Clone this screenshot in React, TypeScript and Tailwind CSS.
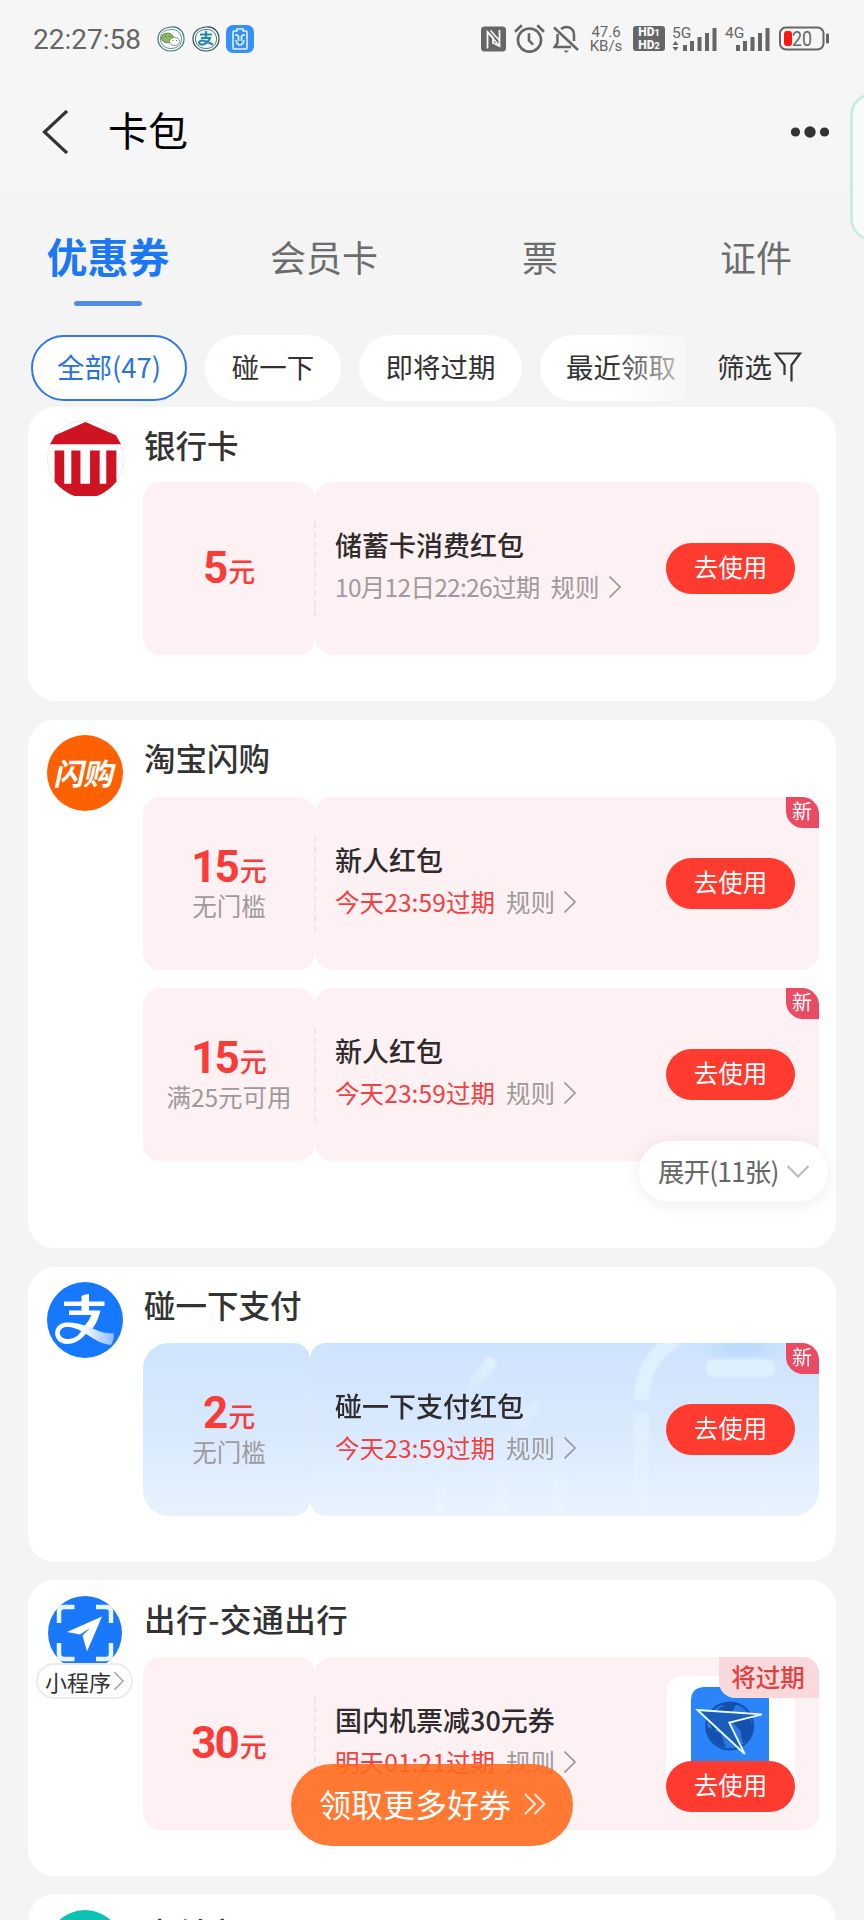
import type { ReactNode } from 'react'

type Coupon = {
  amount: string
  condition?: string
  title: string
  expire: string
  urgent?: boolean
  badge?: string
  thumb?: boolean
  blue?: boolean
}

type Shop = {
  name: string
  icon: ReactNode
  cardClass: string
  nameClass?: string
  listClass?: string
  coupons: Coupon[]
  miniApp?: boolean
  more?: string
}

const tabs = ['优惠券', '会员卡', '票', '证件']

function BankIcon() {
  return (
    <svg viewBox="0 0 76 76" className="size-[77px] -mt-[1px]">
      <circle cx="38" cy="38" r="37.5" fill="#fff" stroke="#ececec" strokeWidth="1" />
      <path d="M38 2 68 15 73 24H3L8 15Z" fill="#cf1322" />
      <path d="M7.500 30H17V63H24V30H33V63H42.500V30H52V63H58.500V30H68.500V61Q60 71 49.500 75H27Q16 71 7.500 61Z" fill="#cf1322" />
    </svg>
  )
}

function FlashIcon() {
  return (
    <div className="size-[76px] mt-[1px] rounded-full bg-[#ff6000] flex items-center justify-center">
      <span className="text-[30px] leading-none font-bold text-white -skew-x-12 tracking-[-0.5px] pb-[2px] whitespace-nowrap">闪购</span>
    </div>
  )
}

function AlipayIcon() {
  return (
    <svg viewBox="0 0 76 76" className="size-[76px] mt-[1px]">
      <defs>
        <linearGradient id="tail" x1="0" x2="1">
          <stop offset="0.45" stopColor="#fff" />
          <stop offset="1" stopColor="#8dbcff" />
        </linearGradient>
      </defs>
      <circle cx="38" cy="38" r="38" fill="#1677ff" />
      <path d="M17 19.500H34.500V14Q38 12 42 12V19.500H57.500V24H42V28.500H53.500Q51 39 45 47.500L37 44.500Q42 39 44.500 33H22V28.500H34.500V24H17Z" fill="#fff" />
      <path d="M44 45C37 56 29 62 20 62C5 62 3.500 41 20 40.500C30 40 39 44 48 47.500C55 50.500 61 51.500 67 51.500Q67 58 64 63C51 61.500 44 54.500 35 49.500C29 46 24 44.500 19 45C10 46 11 57 21 57C29 57 33 52 37 45Z" fill="url(#tail)" />
    </svg>
  )
}

function TravelIcon() {
  return (
    <svg viewBox="0 0 76 76" className="size-[76px] mt-[2px]">
      <circle cx="38" cy="37" r="37" fill="#1a78fb" />
      <path d="M12 27V16Q12 11 17 11H27.500M49 11H59Q64 11 64 16V27M12 47V58Q12 63 17 63H27.500M49 63H59Q64 63 64 58V47" fill="none" stroke="#e9f6ff" strokeWidth="4.500" />
      <path d="M55 20.500 20 36 33 38.500 43 32 35.500 39.500 40 55.500Z" fill="#fff" />
    </svg>
  )
}

function Chevron({ className }: { className: string }) {
  return (
    <svg viewBox="0 0 12 22" className={className} fill="none" stroke="currentColor" strokeWidth="1.600">
      <path d="M0.500 0.500 11 11 0.500 21.500" />
    </svg>
  )
}

function FlightThumb() {
  return (
    <svg viewBox="0 0 78 74" className="w-[78px] h-[74px] -translate-x-[1px]">
      <path d="M14 0H64Q78 0 78 14V74H0V14Q0 0 14 0Z" fill="#2b84f8" />
      <circle cx="38.700" cy="39" r="23.500" fill="#2b77e6" stroke="#1450ae" strokeWidth="2" />
      <path d="M17 30Q24 25 30 20L45 17 41 26 22 45Z" fill="#1450ae" />
      <path d="M30 17Q38 13 47 17L41 20H34ZM47 26 57 29Q64 38 60 51L52 56 49 43 43 37ZM17 40 30 47 35 61Q20 57 16 43Z" fill="#1450ae" />
      <path d="M6.500 23 71 27.300 38.300 35.700 53.700 67Z" fill="#1b5db9" stroke="#eaffff" strokeWidth="1.800" />
    </svg>
  )
}

/* hand and phone watermark behind the tap-to-pay coupon */
function TapArt() {
  return (
    <svg viewBox="0 0 676 173" className="absolute inset-0 w-full h-full" fill="none">
      <defs>
        <linearGradient id="fadeDown" x1="0" x2="0" y1="0" y2="1">
          <stop offset="0" stopColor="#eaf5ff" stopOpacity="0" />
          <stop offset="1" stopColor="#edf6ff" stopOpacity="0.600" />
        </linearGradient>
        <linearGradient id="finger" x1="1" x2="0" y1="0" y2="1">
          <stop offset="0" stopColor="#e3f2ff" stopOpacity="0.850" />
          <stop offset="1" stopColor="#e3f2ff" stopOpacity="0.100" />
        </linearGradient>
        <radialGradient id="glow">
          <stop offset="0" stopColor="#b4d6fa" stopOpacity="0.800" />
          <stop offset="1" stopColor="#b4d6fa" stopOpacity="0" />
        </radialGradient>
        <filter id="soft" x="-20%" y="-20%" width="140%" height="140%">
          <feGaussianBlur stdDeviation="1.500" />
        </filter>
      </defs>
      <ellipse cx="600" cy="3" rx="46" ry="22" fill="url(#glow)" />
      <g filter="url(#soft)">
        <path d="M320 56 347 20" stroke="url(#finger)" strokeWidth="12" strokeLinecap="round" />
        <path d="M360 102 391 63" stroke="url(#finger)" strokeWidth="12" strokeLinecap="round" opacity="0.600" />
        <path d="M498 57C500 28 509 12 532 -4" stroke="#e3f3ff" strokeWidth="15" opacity="0.800" />
        <rect x="490" y="68" width="16" height="110" fill="#e8f3ff" opacity="0.500" />
        <rect x="563" y="16" width="69" height="18" rx="8" fill="#e0f1ff" opacity="0.850" />
        <path d="M293 100H303V178H293ZM352 96H366V178H352ZM414 94H432L420 178H406Z" fill="url(#fadeDown)" />
      </g>
    </svg>
  )
}

function UseButton() {
  return (
    <button className="w-[129px] h-[51px] rounded-full bg-[#ff3a2f] text-white text-[24.5px] leading-none pb-[2px] relative">
      去使用
    </button>
  )
}

function CouponRow({ c }: { c: Coupon }) {
  return (
    <div className="relative flex h-[173px] w-[676px] overflow-hidden">
      <div
        className={
          c.blue
            ? 'w-[167px] rounded-l-[26px] rounded-r-[16px] bg-linear-to-b from-[#cfe4fd] via-[#d8e9fd] to-[#e8f2ff]'
            : 'w-[172px] rounded-[17px] bg-[#fdf1f3]'
        }
      />
      <div
        className={
          c.blue
            ? 'flex-1 rounded-l-[16px] rounded-r-[26px] bg-linear-to-b from-[#cee3fd] via-[#d9e9fd] to-[#e8f3ff]'
            : 'flex-1 rounded-[17px] bg-[#fdf1f3]'
        }
      />
      {c.blue && <TapArt />}
      <div className={`absolute top-[40px] h-[94px] border-l-2 border-dashed border-[#efe4e8] ${c.blue ? 'left-[166px] opacity-50' : 'left-[171px]'}`} />

      <div className={`absolute left-0 top-0 w-[172px] h-full flex flex-col items-center justify-center ${c.condition ? 'pt-[1px]' : 'pb-[1px]'}`}>
        <div className={`flex items-baseline text-[#f93c38] h-[43px] ${c.condition ? 'translate-y-[1px]' : ''}`}>
          <span className="font-['Roboto'] font-bold text-[44px] leading-[43px] tracking-[-2px] mr-[2px]">{c.amount}</span>
          <span className="text-[27px] leading-[43px] font-medium relative -top-[1px]">元</span>
        </div>
        {c.condition && (
          <div className="text-[24.5px] leading-[36px] text-[#a09a9c] whitespace-nowrap">{c.condition}</div>
        )}
      </div>

      <div className="absolute left-[192px] top-[43px]">
        <p className="text-[27px] leading-[40px] font-medium text-[#2f2b2d] whitespace-nowrap">{c.title}</p>
        <div className="flex items-center h-[44px] text-[24.5px] leading-[42px] whitespace-nowrap">
          <span className={c.urgent ? 'text-[#f24040] tracking-[0.1px]' : 'text-[#a09a9c] tracking-[-0.7px]'}>{c.expire}</span>
          <span className="ml-[11px] text-[#a09a9c]">规则</span>
          <Chevron className="ml-[9px] w-[12px] h-[22px] text-[#999]" />
        </div>
      </div>

      {c.thumb ? (
        <div className="absolute right-[24px] top-[19px] w-[129px] h-[135px]">
          <div className="absolute inset-x-0 top-0 h-[112px] bg-white rounded-t-[16px] flex justify-center pt-[11px]">
            <FlightThumb />
          </div>
          <div className="absolute left-0 top-[85px]">
            <UseButton />
          </div>
        </div>
      ) : (
        <div className="absolute right-[24px] top-[61px]">
          <UseButton />
        </div>
      )}

      {c.badge === '新' && (
        <span className="absolute right-0 top-0 w-[33px] h-[31px] rounded-tr-[17px] rounded-bl-[17px] bg-[#eb4a63] text-white text-[20px] leading-[28px] text-center pr-[1px]">
          新
        </span>
      )}
      {c.badge && c.badge !== '新' && (
        <span className="absolute right-0 top-0 w-[100px] h-[41px] rounded-tr-[16px] rounded-bl-[16px] bg-[#fad9dc] text-[#e2403f] text-[24.5px] font-medium leading-[40px] text-center pr-[2px]">
          {c.badge}
        </span>
      )}
    </div>
  )
}

const shops: Shop[] = [
  {
    name: '银行卡',
    icon: <BankIcon />,
    cardClass: 'h-[294px]',
    coupons: [{ amount: '5', title: '储蓄卡消费红包', expire: '10月12日22:26过期' }],
  },
  {
    name: '淘宝闪购',
    icon: <FlashIcon />,
    cardClass: 'h-[528px] mt-[19px]',
    listClass: 'mt-[2px]',
    more: '展开(11张)',
    coupons: [
      { amount: '15', condition: '无门槛', title: '新人红包', expire: '今天23:59过期', urgent: true, badge: '新' },
      { amount: '15', condition: '满25元可用', title: '新人红包', expire: '今天23:59过期', urgent: true, badge: '新' },
    ],
  },
  {
    name: '碰一下支付',
    icon: <AlipayIcon />,
    cardClass: 'h-[295px] mt-[19px]',
    listClass: 'mt-[1px]',
    coupons: [
      { amount: '2', condition: '无门槛', title: '碰一下支付红包', expire: '今天23:59过期', urgent: true, badge: '新', blue: true },
    ],
  },
  {
    name: '出行-交通出行',
    icon: <TravelIcon />,
    cardClass: 'h-[296px] mt-[18px]',
    nameClass: 'pt-[16px] tracking-[0.6px]',
    listClass: 'mt-[2px]',
    miniApp: true,
    coupons: [{ amount: '30', title: '国内机票减30元券', expire: '明天01:21过期', urgent: true, badge: '将过期', thumb: true }],
  },
  {
    name: '支付宝',
    icon: <div className="size-[76px] mt-[2px] rounded-full bg-[#0cc2b4]" />,
    cardClass: 'h-[296px] mt-[18px]',
    nameClass: 'pt-[16px]',
    coupons: [],
  },
]

function ShopCard({ shop }: { shop: Shop }) {
  return (
    <section className={`relative shrink-0 mx-[28px] bg-white rounded-[27px] flex ${shop.cardClass}`}>
      <div className="w-[115px] shrink-0 pt-[14px] pl-[19px]">
        {shop.icon}
        {shop.miniApp && (
          <div className="relative -ml-[11px] -mt-[9px] w-[97px] h-[36px] rounded-full bg-white border-2 border-[#ececec] flex items-center justify-center text-[22px] leading-none text-[#333] whitespace-nowrap">
            小程序
            <Chevron className="w-[10px] h-[20px] text-[#999] ml-[3px]" />
          </div>
        )}
      </div>
      <div>
        <h2 className={`h-[75px] pl-[1px] text-[31.5px] leading-[44px] font-medium text-[#333] whitespace-nowrap ${shop.nameClass ?? 'pt-[15px]'}`}>
          {shop.name}
        </h2>
        <div className={`flex flex-col gap-[18px] ${shop.listClass ?? ''}`}>
          {shop.coupons.map((c, i) => (
            <CouponRow key={i} c={c} />
          ))}
        </div>
      </div>
      {shop.more && (
        <button className="absolute right-[8px] top-[421px] w-[189px] h-[61px] rounded-full bg-white shadow-[0_2px_18px_rgba(0,0,0,0.08)] flex items-center pl-[19px] pb-[1px] text-[26.5px] text-[#666] whitespace-nowrap">
          <span className="w-[120px] tracking-[-0.9px]">{shop.more}</span>
          <svg viewBox="0 0 22 13" className="w-[22px] h-[13px] ml-[9px]" fill="none" stroke="#bbb" strokeWidth="2">
            <path d="M0.500 1 11 11.500 21.500 1" />
          </svg>
        </button>
      )}
    </section>
  )
}

function Signal({ label, arrows }: { label: string; arrows?: boolean }) {
  return (
    <svg viewBox="0 0 45 28" className="w-[45px] h-[28px] overflow-visible" fill="#666">
      <text x="0" y="12.500" fontSize="15.500" fontFamily="Roboto">{label}</text>
      {arrows && <path d="M0.500 20 3.500 16 6.500 20ZM0.500 22 3.500 26 6.500 22Z" />}
      <path d="M11 20H15V26H11ZM18 16H22V26H18ZM25.500 12H29.500V26H25.500ZM33 8H37V26H33ZM40.500 3H44.500V26H40.500Z" />
    </svg>
  )
}

function StatusBar() {
  return (
    <div className="h-[74px] flex items-center justify-between pl-[33px] pr-[35px] pt-[3px] text-[#666]">
      <div className="flex items-center">
        <span className="font-['Roboto'] text-[28px] leading-none w-[124px] pt-[2px]">22:27:58</span>
        <svg viewBox="0 0 28 26" className="w-[28px] h-[26px]">
          <path d="M14 1C22 0 27 6 27 13S21 25 14 25 1 20 1 13 6 2 14 1Z" fill="#f4fbfb" stroke="#45767c" strokeWidth="1.200" />
          <path d="M14 3.500C20 3 24.500 7 24.500 13S20 22.500 14 22.500 3.500 19 3.500 13 7 4 14 3.500Z" fill="none" stroke="#45767c" strokeWidth="0.800" />
          <ellipse cx="10.500" cy="12" rx="6" ry="4.800" fill="#8fbb58" stroke="#4b6c3b" strokeWidth="0.800" />
          <ellipse cx="17.500" cy="15.500" rx="5" ry="4" fill="#fff" stroke="#777" strokeWidth="0.800" />
          <path d="M8 10.500H9M12 10.500H13M15.500 14.500H16.300M19 14.500H19.800" stroke="#456" strokeWidth="1" />
        </svg>
        <svg viewBox="0 0 28 26" className="w-[28px] h-[26px] ml-[7px]">
          <path d="M14 1C22 0 27 6 27 13S21 25 14 25 1 20 1 13 6 2 14 1Z" fill="#f4fbfb" stroke="#2f4e58" strokeWidth="1.200" />
          <path d="M14 3.500C20 3 24.500 7 24.500 13S20 22.500 14 22.500 3.500 19 3.500 13 7 4 14 3.500Z" fill="none" stroke="#2f4e58" strokeWidth="0.800" />
          <path d="M8 8.500H20M14 5V12M9 12H18C16 17 12 19 9 18.500S7 14.500 10 14.500 17 17 21 18.500" fill="none" stroke="#2a86b0" strokeWidth="2.200" />
        </svg>
        <svg viewBox="0 0 28 28" className="w-[28px] h-[28px] ml-[6px]">
          <rect width="28" height="28" rx="7" fill="#3591f5" />
          <path d="M11 4H17V6H20Q21 6 21 7V23Q21 24 20 24H8Q7 24 7 23V7Q7 6 8 6H11Z" fill="none" stroke="#dff2ff" strokeWidth="1.600" />
          <path d="M9 10Q12 9.500 12.500 12V16M19 10Q16 9.500 15.500 12V16M10 15Q11 20 14 20T18 15" fill="none" stroke="#dff2ff" strokeWidth="1.700" />
        </svg>
      </div>
      <div className="flex items-center">
        <svg viewBox="0 0 25 26" className="w-[25px] h-[26px]">
          <rect y="0.500" width="25" height="25" rx="3.500" fill="#666" />
          <path d="M6.500 22.500V6L12 11.500V17L18.500 20V4" fill="none" stroke="#f6f6f6" strokeWidth="1.800" />
          <path d="M9.500 4.500 18.500 14.500M6.500 6 18.500 20" fill="none" stroke="#f6f6f6" strokeWidth="1.600" />
        </svg>
        <svg viewBox="0 0 30 28" className="w-[31px] h-[29px] ml-[8px]" fill="none" stroke="#666" strokeWidth="2.500">
          <circle cx="15" cy="15.500" r="11.200" />
          <path d="M14.500 9V16L18.500 20M1 7.500 7.500 1.200M29 7.500 22.500 1.200" />
        </svg>
        <svg viewBox="0 0 26 28" className="w-[26px] h-[28px] ml-[8px]" fill="none" stroke="#666" strokeWidth="2.500">
          <path d="M1 2.500 25 25M4.500 9V18L1.500 22H18M8 4C14-0.500 21 3 21 10V16" />
          <path d="M10.500 25.500H16L13.200 28Z" fill="#666" stroke="none" />
        </svg>
        <div className="ml-[10px] w-[34px] font-['Roboto'] text-[15px] leading-[14px] text-center whitespace-nowrap">
          47.6
          <br />
          KB/s
        </div>
        <div className="ml-[10px] w-[32px] h-[25px] rounded-[3px] bg-[#666] text-[#f6f6f6] font-['Roboto'] font-black text-[12px] leading-[11.500px] pt-[1px] text-center">
          HD<span className="text-[9px]">1</span>
          <br />
          HD<span className="text-[9px]">2</span>
        </div>
        <div className="ml-[7px]"><Signal label="5G" arrows /></div>
        <div className="ml-[8px]"><Signal label="4G" /></div>
        <svg viewBox="0 0 50 25" className="w-[50px] h-[25px] ml-[9px]">
          <rect x="1" y="1.500" width="43.500" height="22" rx="6" fill="none" stroke="#666" strokeWidth="2" />
          <rect x="47" y="7.500" width="3" height="10" rx="1" fill="#666" />
          <rect x="5" y="5" width="8" height="15" rx="3" fill="#fb1414" />
          <text x="13" y="19.500" fontSize="20" fontFamily="Roboto" fill="#666" textLength="20" lengthAdjust="spacingAndGlyphs">20</text>
        </svg>
      </div>
    </div>
  )
}

export default function App() {
  return (
    <div className="relative w-[864px] h-[1920px] overflow-hidden bg-[#f4f4f4] flex flex-col font-['Noto_Sans_CJK_SC',sans-serif]">
      <header className="h-[190px] shrink-0 bg-[#f6f6f6]">
        <StatusBar />
        <div className="h-[116px] flex items-center pl-[42px] pr-[35px]">
          <svg viewBox="0 0 26 44" className="w-[26px] h-[44px]" fill="none" stroke="#333" strokeWidth="3.200">
            <path d="M25 1 2.500 22 25 43" />
          </svg>
          <h1 className="ml-[40px] text-[40px] leading-none text-black pb-[6px]">卡包</h1>
          <svg viewBox="0 0 38 12" className="w-[38px] h-[12px] ml-auto" fill="#333">
            <circle cx="4.500" cy="6" r="4.600" />
            <circle cx="19" cy="6" r="5.700" />
            <circle cx="33.500" cy="6" r="4.600" />
          </svg>
        </div>
      </header>

      <nav className="grid grid-cols-4 h-[145px] shrink-0 pt-[34px]">
        {tabs.map((tab, i) => (
          <div key={tab} className="flex flex-col items-center">
            <span
              className={
                i === 0
                  ? 'h-[64px] leading-[62px] text-[41px] font-bold text-[#1c77f5]'
                  : 'h-[64px] leading-[64px] text-[36px] text-[#6c6c6c]'
              }
            >
              {tab}
            </span>
            {i === 0 && <span className="mt-[13px] w-[68px] h-[5px] rounded-full bg-[#558be8]" />}
          </div>
        ))}
      </nav>

      <div className="flex h-[72px] shrink-0 pl-[31px] text-[27.5px] text-[#333]">
        <div className="relative flex w-[655px] overflow-hidden gap-[18px] *:h-[66px] *:shrink-0 *:flex *:items-center *:justify-center *:rounded-full *:pb-[2px]">
          <span className="w-[156px] bg-white border-2 border-[#2f78e0] text-[#2b73dc]">全部(47)</span>
          <span className="w-[136px] bg-white">碰一下</span>
          <span className="w-[163px] bg-white">即将过期</span>
          <span className="w-[162px] bg-white">最近领取</span>
          <i className="absolute right-0 top-0 w-[75px] rounded-none! bg-linear-to-r from-[#f4f4f4]/0 to-[#f4f4f4]/80" />
        </div>
        <div className="ml-[31px] h-[66px] flex items-center pb-[2px]">
          筛选
          <svg viewBox="0 0 28 30" className="w-[28px] h-[30px] ml-[2px]" fill="none" stroke="#333" strokeWidth="2.200">
            <path d="M10.500 23V13L1.500 1.500H26L17.500 13V29.500" />
          </svg>
        </div>
      </div>

      {shops.map((shop) => (
        <ShopCard key={shop.name} shop={shop} />
      ))}

      <button className="absolute left-[291px] top-[1764px] w-[282px] h-[82px] rounded-full bg-[#ff6c1e]/90 text-white text-[32px] pl-[28px] flex items-center pb-[4px] whitespace-nowrap">
        领取更多好券
        <svg viewBox="0 0 22 22" className="w-[22px] h-[22px] mt-[2px] ml-[13px]" fill="none" stroke="#ffe6d6" strokeWidth="2.200">
          <path d="M1 1 11 11 1 21M10.500 1 20.500 11 10.500 21" />
        </svg>
      </button>

      {/* edge panel handle */}
      <div className="absolute left-[850px] top-[93px] w-[60px] h-[148px] rounded-[22px] border-[3px] border-[#c9ebe9] bg-[#f8f9f9]" />
    </div>
  )
}
